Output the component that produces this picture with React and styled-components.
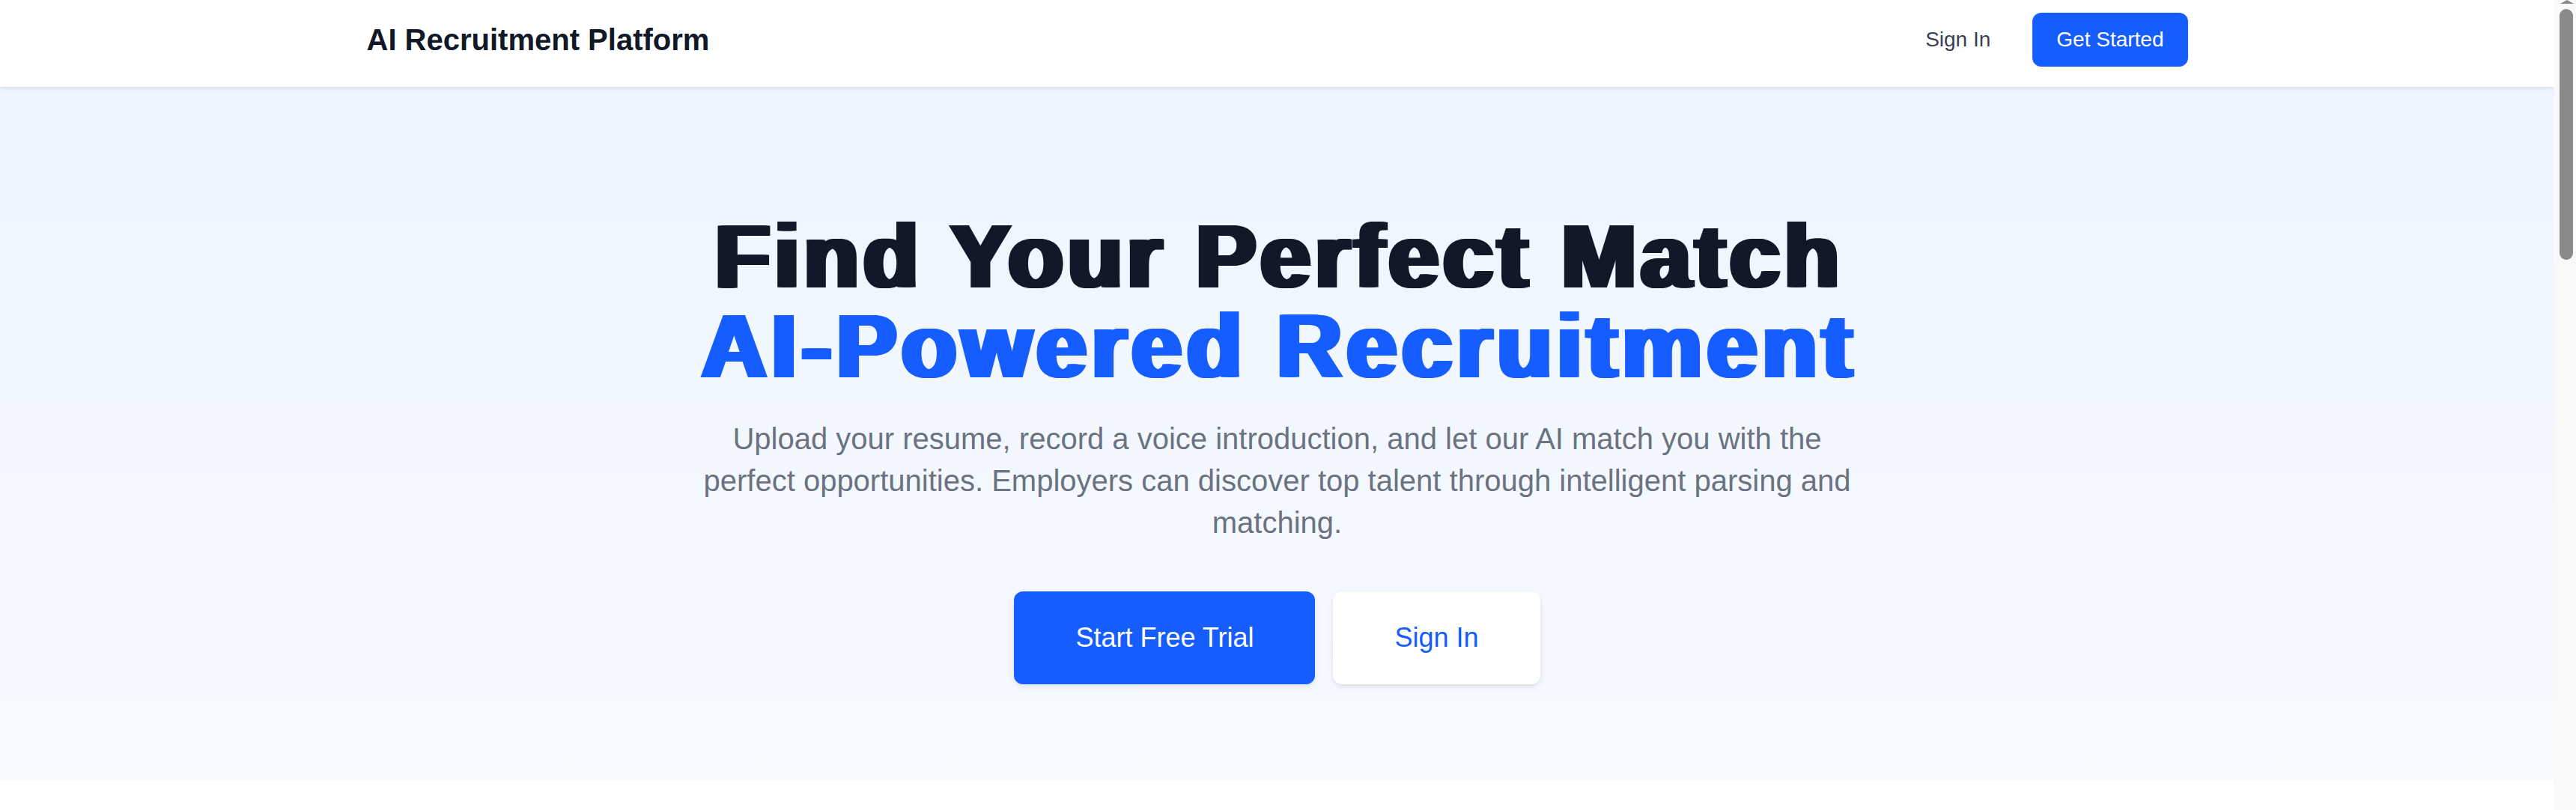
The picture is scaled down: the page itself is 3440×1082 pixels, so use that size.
import React from "react";
import styled, { createGlobalStyle } from "styled-components";

const GlobalStyle = createGlobalStyle`
  html, body {
    margin: 0;
    padding: 0;
    background: #ffffff;
    font-family: "Liberation Sans", Arial, sans-serif;
  }
  body {
    padding-right: 29px;
  }
  * { box-sizing: border-box; }
  ::-webkit-scrollbar { display: none; }
`;

const BLUE = "#165dff";

function App() {
  return (
    <>
      <GlobalStyle />
      <Header>
        <HeaderInner>
          <Brand>AI Recruitment Platform</Brand>
          <Nav>
            <NavLink>Sign In</NavLink>
            <NavButton>Get Started</NavButton>
          </Nav>
        </HeaderInner>
      </Header>

      <Hero>
        <Heading>
          Find Your Perfect Match
          <Accent>AI-Powered Recruitment</Accent>
        </Heading>
        <Lead>
          Upload your resume, record a voice introduction, and let our AI match
          you with the perfect opportunities. Employers can discover top talent
          through intelligent parsing and matching.
        </Lead>
        <Actions>
          <CtaButton $primary>Start Free Trial</CtaButton>
          <CtaButton>Sign In</CtaButton>
        </Actions>
      </Hero>

      <Below />

      {/* browser scrollbar as it shows in the capture */}
      <ScrollRail>
        <ScrollArrow />
        <ScrollThumb />
      </ScrollRail>
    </>
  );
}

export default App;

const Header = styled.header`
  position: relative;
  z-index: 2;
  background: #ffffff;
  padding-bottom: 10px;
  box-shadow: 0 2px 5px rgba(15, 23, 42, 0.1);
`;

const HeaderInner = styled.div`
  max-width: 2560px;
  height: 106px;
  margin: 0 auto;
  padding: 0 64px;
  display: flex;
  align-items: center;
  justify-content: space-between;
`;

const Brand = styled.div`
  font-size: 40px;
  line-height: 56px;
  font-weight: 700;
  color: #111827;
`;

const Nav = styled.nav`
  display: flex;
  align-items: center;
  gap: 24px;
`;

const NavLink = styled.a`
  font-size: 28px;
  line-height: 40px;
  padding: 16px 32px;
  color: #374151;
  cursor: pointer;
`;

const NavButton = styled.button`
  font-family: inherit;
  font-size: 28px;
  line-height: 40px;
  padding: 16px 32px;
  border: none;
  border-radius: 12px;
  background: ${BLUE};
  color: #ffffff;
  cursor: pointer;
`;

const Hero = styled.section`
  background: linear-gradient(180deg, #eef5ff 0%, #f7faff 100%);
  padding: 166px 64px 128px;
  display: flex;
  flex-direction: column;
  align-items: center;
  text-align: center;
`;

const Heading = styled.h1`
  margin: 0;
  padding-left: 6px;
  font-size: 120px;
  line-height: 120px;
  font-weight: 700;
  letter-spacing: 6px;
  color: #111827;
  text-shadow: 4.5px 0 0 currentColor, -4.5px 0 0 currentColor,
    2.25px 0 0 currentColor, -2.25px 0 0 currentColor;
`;

const Accent = styled.span`
  display: block;
  letter-spacing: 6.8px;
  color: ${BLUE};
`;

const Lead = styled.p`
  max-width: 1536px;
  margin: 36px 0 0;
  font-size: 40px;
  line-height: 56px;
  color: #6b7280;
`;

const Actions = styled.div`
  margin-top: 64px;
  display: flex;
  gap: 24px;
  justify-content: center;
`;

const CtaButton = styled.button`
  font-family: inherit;
  font-size: 36px;
  line-height: 56px;
  padding: 34px 82px;
  border: none;
  border-radius: 12px;
  cursor: pointer;
  background: ${(p) => (p.$primary ? BLUE : "#ffffff")};
  color: ${(p) => (p.$primary ? "#ffffff" : BLUE)};
  box-shadow: 0 4px 8px rgba(15, 23, 42, 0.08), 0 1px 3px rgba(15, 23, 42, 0.06);
`;

const Below = styled.section`
  height: 2450px;
  background: #ffffff;
`;

const ScrollRail = styled.div`
  position: fixed;
  top: 0;
  right: 0;
  width: 29px;
  height: 100vh;
  background: #f9f9f9;
  z-index: 10;
`;

const ScrollArrow = styled.div`
  position: absolute;
  top: 0;
  left: 8px;
  width: 0;
  height: 0;
  border-left: 9px solid transparent;
  border-right: 9px solid transparent;
  border-bottom: 5px solid #8a8a8a;
`;

const ScrollThumb = styled.div`
  position: absolute;
  top: 12px;
  left: 7px;
  width: 18px;
  height: 335px;
  border-radius: 9px;
  background: #8a8a8a;
`;
